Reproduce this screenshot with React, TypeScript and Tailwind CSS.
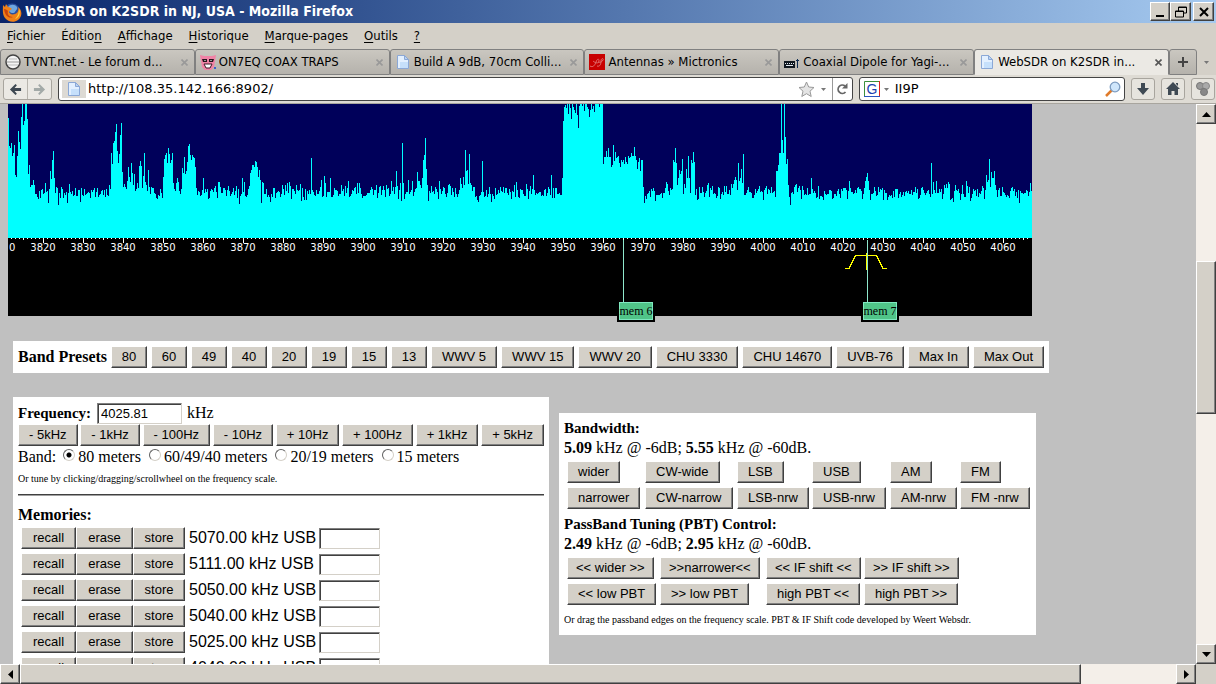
import { useMemo, useState } from 'react';
import type { ReactNode } from 'react';

// Known signals in the band, one value per pixel column, measured from the top of the plot
const SIGNALS: [number, number[]][] = [
  [0, [14, 42, 44, 39, 52, 49, 41, 71, 73, 52, 27, 38, 45, 13, 0, 21, 17, 0, 0, 15, 70, 61, 83, 81, 81, 76, 81, 90]],
  [42, [67, 75, 56, 47, 74, 89, 83, 84, 101]],
  [103, [49, 60, 39, 37, 28, 20, 47, 59, 50, 31, 19, 68, 83, 80, 83, 85, 77, 63, 73, 78, 59, 69, 81, 70, 87, 85, 79, 84, 62, 57, 62, 84, 72, 49, 78, 81, 87, 66, 83, 90]],
  [155, [73, 55, 51, 49, 59, 44, 50, 59, 56, 49, 79, 85, 87, 79, 74, 78, 87, 90, 85, 64, 69, 53, 70, 67, 58, 42, 40, 51, 56, 51, 53, 54, 63, 84]],
  [195, [74]],
  [210, [78, 78]],
  [234, [74]],
  [242, [69, 66, 61, 61, 63, 57, 58, 63, 73, 66, 76, 99, 78, 79]],
  [303, [54]],
  [316, [72, 79]],
  [322, [74]],
  [388, [67]],
  [394, [39, 79]],
  [400, [76]],
  [404, [77]],
  [409, [68, 77, 77, 81, 84, 74, 56, 51, 34, 65, 81, 97]],
  [452, [74, 80, 84, 73, 81, 46, 67, 66, 80, 50, 79, 81, 87]],
  [474, [57]],
  [525, [71]],
  [543, [71]],
  [554, [74]],
  [555, [17, 3, 1, 4, 0, 10, 0, 4, 15, 0, 3, 6, 9, 0, 11, 24, 2, 0, 0, 2, 0, 7, 0, 0, 3, 5, 13, 6, 0, 5, 2, 8, 0, 0, 0, 0, 3, 0, 0, 0]],
  [595, [60, 53, 53, 47, 53, 44, 53, 53, 63, 61, 41, 57, 48, 54, 53, 52, 59, 63, 56, 58, 56, 60, 53, 58, 60, 52, 54, 53, 49, 52, 52, 43, 52, 56, 65, 58, 54, 67, 56, 56, 83, 99, 92, 95, 90]],
  [665, [56, 58, 44, 59, 81, 74, 66, 70, 67, 55, 90, 80, 84, 65, 74, 52, 74, 89, 56, 59, 48, 58, 91]],
  [723, [80, 84, 80, 76, 73, 76, 86, 59, 77, 74, 65, 79, 50, 91]],
  [768, [67, 67, 61, 49, 49, 0, 36, 49, 0, 33, 60, 55, 81, 93, 101]],
  [803, [74]],
  [856, [84, 77, 73, 69, 77, 86]],
  [923, [59, 90, 78]],
  [928, [77]],
  [940, [78, 80]],
  [978, [71, 78, 76, 55, 83, 68, 74, 74, 67, 81]],
];

const PLOT_WIDTH = 1024;
const PLOT_HEIGHT = 134;

function buildSpectrum(): number[] {
  const tops: number[] = [];
  let seed = 8902;
  const random = () => {
    seed = (seed * 1103515245 + 12345) % 2147483648;
    return seed / 2147483648;
  };
  for (let x = 0; x < PLOT_WIDTH; x++) {
    tops.push(Math.round(88 + (random() + random() + random() - 1.5) * 9));
  }
  SIGNALS.forEach(([start, values]) => {
    values.forEach((value, i) => {
      tops[start + i] = value;
    });
  });
  return tops;
}

const PRESETS = ['80', '60', '49', '40', '20', '19', '15', '13', 'WWV 5', 'WWV 15', 'WWV 20', 'CHU 3330', 'CHU 14670', 'UVB-76', 'Max In', 'Max Out'];
const STEPS = ['- 5kHz', '- 1kHz', '- 100Hz', '- 10Hz', '+ 10Hz', '+ 100Hz', '+ 1kHz', '+ 5kHz'];
const BANDS = ['80 meters', '60/49/40 meters', '20/19 meters', '15 meters'];
const MEMORIES = ['5070.00 kHz USB', '5111.00 kHz USB', '5050.00 kHz USB', '5040.00 kHz USB', '5025.00 kHz USB', '4040.00 kHz USB'];
const MODES = ['wider', 'CW-wide', 'LSB', 'USB', 'AM', 'FM', 'narrower', 'CW-narrow', 'LSB-nrw', 'USB-nrw', 'AM-nrw', 'FM -nrw'];
const PBT_WIDTH = ['<< wider >>', '>>narrower<<', '<< IF shift <<', '>> IF shift >>'];
const PBT_EDGES = ['<< low PBT', '>> low PBT', 'high PBT <<', 'high PBT >>'];
const MENUS = [
  ['', 'F', 'ichier'],
  ['Éditio', 'n', ''],
  ['', 'A', 'ffichage'],
  ['', 'H', 'istorique'],
  ['', 'M', 'arque-pages'],
  ['', 'O', 'utils'],
  ['', '?', ''],
];

const RAISED = 'bg-[#d4d0c8] border border-t-white border-l-white border-r-[#404040] border-b-[#404040] shadow-[inset_-1px_-1px_0_#808080]';
const SUNKEN = 'bg-white border border-t-[#808080] border-l-[#808080] border-r-[#d4d0c8] border-b-[#d4d0c8] shadow-[inset_1px_1px_0_#404040]';

const PageButton = ({ children, className = 'px-[10px]' }: { children: ReactNode; className?: string }) => (
  <button className={`h-[22px] shrink-0 justify-self-start whitespace-pre text-[13px] leading-[18px] text-black font-['Liberation_Sans',sans-serif] ${RAISED} ${className}`}>
    {children}
  </button>
);

const DocumentIcon = () => (
  <svg className="w-4 h-4 shrink-0" viewBox="0 0 16 16">
    <path d="M2.5 1.5h7l4 4v9h-11z" fill="#e3f0ff" stroke="#8ba8d6" />
    <path d="M9.5 1.5v4h4z" fill="#b9d3f5" stroke="#8ba8d6" />
    <path d="M5 8h8v6H5z" fill="#c6e0fb" />
  </svg>
);

const FirefoxIcon = () => (
  <svg className="w-5 h-5 shrink-0" viewBox="0 0 20 20">
    <circle cx="10" cy="10" r="8.5" fill="#2c4f9e" />
    <path d="M6 5c2-3 7-3 9 0 1 2-1 3-2 5-1 2-5 1-6-1z" fill="#6fa6e0" />
    <path d="M1 3l2 2 1-3 2 3c2 0 3 1 4 2L7 9c0 3 3 4 6 3 3-1 4-4 3-7 5 4 4 10 0 13-4 3-10 2-13-2C0 12 1 7 1 3z" fill="#f08018" />
    <path d="M2 7c2 0 3 1 4 2-1 3 1 6 5 6-4 2-8-1-9-8z" fill="#c9430c" />
    <path d="M17 7c2 4 0 9-4 10 3-3 4-6 4-10z" fill="#ffd23c" />
  </svg>
);

const ForumIcon = () => (
  <svg className="w-4 h-4 shrink-0" viewBox="0 0 16 16">
    <circle cx="8" cy="8" r="7" fill="#f4f4f4" stroke="#444" strokeWidth="1.5" />
    <path d="M4 5h8M3 11h10" stroke="#bbb" />
    <path d="M2 8h12" stroke="#999" />
  </svg>
);

const PinkCatIcon = () => (
  <svg className="w-4 h-4 shrink-0" viewBox="0 0 16 16">
    <path d="M0 1l4 1h8l4-1-1 6-1 6-3 3H5l-3-3-1-6z" fill="#f083a6" />
    <path d="M2 5h5v3H3zM9 5h5l-1 3H9z" fill="#24141c" />
    <path d="M4 6h2v1H4zM10 6h2v1h-2z" fill="#999" />
    <path d="M4 10h8l-2 4H6z" fill="#fff" stroke="#401828" />
    <path d="M14 13h2v2h-2z" fill="#3d62c9" />
  </svg>
);

const AntennaIcon = () => (
  <svg className="w-4 h-4 shrink-0" viewBox="0 0 16 16">
    <path d="M0 0h16v16H0z" fill="#c80000" />
    <path d="M1 12c3 2 5-1 6-4s3-4 3-1-4 2-6 0M8 12c3 1 4-2 4-5s3-3 2-1-3 3-5 2" fill="none" stroke="#e06a6a" />
  </svg>
);

const RadioIcon = () => (
  <svg className="w-4 h-4 shrink-0" viewBox="0 0 16 16">
    <path d="M0 7h11v7H0z" fill="#101820" />
    <path d="M1 9h1v1H1zM3 9h1v1H3zM5 9h1v1H5zM7 9h1v1H7zM9 9h1v1H9zM2 11h7v1H2z" fill="#e0e8f0" />
    <path d="M13 5h1v9h-1zM12 6h3v1h-3z" fill="#0c2a50" />
  </svg>
);

const TABS: { title: string; icon: ReactNode }[] = [
  { title: 'TVNT.net - Le forum d...', icon: <ForumIcon /> },
  { title: 'ON7EQ COAX TRAPS', icon: <PinkCatIcon /> },
  { title: 'Build A 9dB, 70cm Colli...', icon: <DocumentIcon /> },
  { title: 'Antennas » Mictronics', icon: <AntennaIcon /> },
  { title: 'Coaxial Dipole for Yagi-...', icon: <RadioIcon /> },
  { title: 'WebSDR on K2SDR in...', icon: <DocumentIcon /> },
];

const ArrowIcon = ({ className }: { className: string }) => (
  <svg className={className} viewBox="0 0 14 14">
    <path d="M1 7l6-6 1.500 1.500L6 5.500h7v3H6l2.500 3L7 13z" fill="currentColor" />
  </svg>
);

const CaretIcon = ({ className = '' }: { className?: string }) => (
  <svg className={`w-[5px] h-[3px] shrink-0 text-[#777] ${className}`} viewBox="0 0 5 3">
    <path d="M0 0h5L2.500 3z" fill="currentColor" />
  </svg>
);

const CloseIcon = ({ className }: { className: string }) => (
  <svg className={`w-[7px] h-[7px] ${className}`} viewBox="0 0 7 7">
    <path d="M0.500 0.500l6 6M6.500 0.500l-6 6" stroke="currentColor" strokeWidth="1.600" />
  </svg>
);

const TitleBar = () => (
  <header className="flex items-center h-[23px] shrink-0 pl-[2px] pr-[2px] bg-gradient-to-r from-[#0a246a] to-[#a6caf0]">
    <FirefoxIcon />
    <h1 className="flex-1 ml-[3px] text-[14px] font-bold text-white whitespace-nowrap">
      WebSDR on K2SDR in NJ, USA - Mozilla Firefox
    </h1>
    <button aria-label="Minimize" className={`w-5 h-[19px] flex items-center justify-center ${RAISED}`}>
      <svg className="w-3 h-3" viewBox="0 0 12 12"><path d="M2 9h8v2H2z" /></svg>
    </button>
    <button aria-label="Restore" className={`w-[21px] h-[19px] flex items-center justify-center ${RAISED}`}>
      <svg className="w-3 h-3" viewBox="0 0 12 12">
        <path d="M3.500 5V1H11.500V7H9M3 1.500h9M0.500 5h8v6h-8zM0 5.500h9" fill="none" stroke="#000" />
      </svg>
    </button>
    <button aria-label="Close" className={`w-[21px] h-[19px] ml-[2px] flex items-center justify-center ${RAISED}`}>
      <svg className="w-[10px] h-[10px]" viewBox="0 0 10 10"><path d="M1 1l8 8M9 1l-8 8" stroke="#000" strokeWidth="2" /></svg>
    </button>
  </header>
);

const MenuBar = () => (
  <nav className="flex items-center h-[26px] shrink-0 pl-[7px] gap-4 text-[13px]">
    {MENUS.map(([before, key, after]) => (
      <button key={key} className="whitespace-nowrap">
        {before}<span className="underline underline-offset-2">{key}</span>{after}
      </button>
    ))}
  </nav>
);

const TabBar = () => (
  <div className="flex h-[26px] shrink-0 text-[13px]">
    {TABS.map((tab, i) => {
      const active = i === TABS.length - 1;
      return (
        <div
          key={tab.title}
          className={`flex flex-1 min-w-0 items-center pl-1 pr-[6px] border border-[#808080] rounded-t-[3px] ${
            active ? 'bg-[#ebe9e4] border-b-[#ebe9e4]' : 'bg-gradient-to-b from-[#cac7c0] to-[#b5b2ac]'
          }`}
        >
          {tab.icon}
          <button className="flex-1 min-w-0 ml-[3px] text-left whitespace-nowrap overflow-hidden">{tab.title}</button>
          <button aria-label="Close tab" className="ml-1">
            <CloseIcon className={active ? 'text-[#555]' : 'text-[#999]'} />
          </button>
        </div>
      );
    })}
    <button aria-label="New tab" className="w-7 flex items-center justify-center border border-[#808080] rounded-t-[3px] bg-gradient-to-b from-[#cac7c0] to-[#b5b2ac]">
      <svg className="w-[10px] h-[10px]" viewBox="0 0 10 10"><path d="M5 0v10M0 5h10" stroke="#444" strokeWidth="2" /></svg>
    </button>
    <button aria-label="List all tabs" className="w-[19px] flex items-center justify-center">
      <CaretIcon />
    </button>
  </div>
);

const NAV_BUTTON = 'w-6 h-[22px] flex items-center justify-center shrink-0 bg-[#e6e4de] border border-[#a8a59e] rounded-[3px]';

const NavBar = () => (
  <div className="flex items-center h-[29px] shrink-0 pl-[3px] pr-px gap-[6px] bg-[#dedbd4] border-b border-[#a8a59e]">
    <div className="flex w-[49px] h-[22px] shrink-0 bg-[#ebe9e4] border border-[#a8a59e] rounded-[3px]">
      <button aria-label="Back" className="flex-1 flex items-center justify-center border-r border-[#b8b5ae]">
        <ArrowIcon className="w-[13px] h-[13px] text-[#3d4852]" />
      </button>
      <button aria-label="Forward" className="flex-1 flex items-center justify-center">
        <ArrowIcon className="w-[13px] h-[13px] text-[#a3aaa8] rotate-180" />
      </button>
    </div>
    <div className="flex flex-[3] items-center h-6 bg-white border border-[#444] rounded-[3px]">
      <div className="flex w-6 h-[18px] ml-[3px] items-center justify-center shrink-0 bg-[#dddad4]">
        <DocumentIcon />
      </div>
      <input aria-label="Address" defaultValue="http://108.35.142.166:8902/" className="flex-1 min-w-0 ml-[2px] outline-none text-[13px] font-['DejaVu_Sans',sans-serif]" />
      <button aria-label="Bookmark this page">
        <svg className="w-[17px] h-[17px]" viewBox="0 0 17 17">
          <path d="M8.500 1l2.200 5 5.300.500-4 3.700 1.200 5.300-4.700-2.800-4.700 2.800L5 10.200 1 6.500 6.300 6z" fill="#e4e4e4" stroke="#999" />
        </svg>
      </button>
      <button aria-label="History" className="px-[6px]"><CaretIcon /></button>
      <button aria-label="Reload" className="flex w-5 h-full items-center justify-center border-l border-[#999]">
        <svg className="w-3 h-3" viewBox="0 0 12 12">
          <path d="M9.500 9A4.200 4.200 0 1 1 9 3" fill="none" stroke="#666" strokeWidth="1.800" />
          <path d="M11.500 0v5.500H6z" fill="#666" />
        </svg>
      </button>
    </div>
    <div className="flex flex-1 items-center h-6 bg-white border border-[#444] rounded-[3px]">
      <svg className="w-4 h-4 ml-1 shrink-0" viewBox="0 0 16 16">
        <path d="M0.500 15.500V0.500H15.500" fill="none" stroke="#3c8f3c" />
        <path d="M15.500 0v15.500" stroke="#d22" />
        <path d="M0 15.500H16" stroke="#2a55c0" />
        <text x="8" y="13" textAnchor="middle" fontSize="14" fill="#1b3fb0" fontFamily="Liberation Sans, sans-serif">G</text>
      </svg>
      <CaretIcon className="ml-1" />
      <input aria-label="Search" defaultValue="II9P" className="flex-1 min-w-0 ml-[6px] outline-none text-[13px] font-['DejaVu_Sans',sans-serif]" />
      <button aria-label="Search" className="mr-[3px]">
        <svg className="w-4 h-4" viewBox="0 0 16 16">
          <path d="M1 15l6-6" stroke="#e07b2a" strokeWidth="2.500" />
          <circle cx="10" cy="6" r="4.800" fill="#cfe6fb" stroke="#7d9cc0" strokeWidth="1.300" />
        </svg>
      </button>
    </div>
    <button aria-label="Downloads" className={NAV_BUTTON}>
      <svg className="w-[14px] h-[14px]" viewBox="0 0 14 14"><path d="M5 1h4v5h4l-6 7-6-7h4z" fill="#3f4a54" /></svg>
    </button>
    <button aria-label="Home" className={NAV_BUTTON}>
      <svg className="w-4 h-4" viewBox="0 0 16 16"><path d="M8 1l7 7h-2v6H9.500v-4h-3v4H3V8H1zM11 2h2v3l-2-2z" fill="#3f4a54" /></svg>
    </button>
    <button aria-label="Add-ons" className={NAV_BUTTON}>
      <svg className="w-4 h-4" viewBox="0 0 16 16">
        <circle cx="5" cy="5" r="3.500" fill="#999" stroke="#777" />
        <circle cx="11" cy="5" r="3.500" fill="#aaa" stroke="#888" />
        <circle cx="9" cy="11" r="3.500" fill="#888" stroke="#777" />
      </svg>
    </button>
  </div>
);

const MemoryFlag = ({ label, className }: { label: string; className: string }) => (
  <div className={`absolute top-[136px] flex flex-col ${className}`}>
    <div className="w-px h-[62px] ml-[6px] bg-[#8fe8cc]" />
    <button className="h-5 border-2 border-t-0 border-black bg-[#50c488] text-[12px] leading-4 shadow-[inset_0_0_0_1px_#7fe8c0] font-['Liberation_Serif',serif]">
      {label}
    </button>
  </div>
);

function Spectrum() {
  const tops = useMemo(buildSpectrum, []);
  const path = `M0 ${PLOT_HEIGHT}${tops.map((top, x) => `V${top}H${x + 1}`).join('')}V${PLOT_HEIGHT}Z`;
  const ticks = Array.from({ length: 257 }, (_, i) => i);
  const labels = Array.from({ length: 25 }, (_, i) => i);

  return (
    <div className="relative w-[1024px] h-[212px] bg-black">
      <svg className="block w-[1024px] h-[212px] overflow-hidden" viewBox="0 0 1024 212" shapeRendering="crispEdges">
        <path d="M0 0H1024V134H0z" fill="#00005a" />
        <path d={path} fill="#00ffff" />
        {ticks.map((i) => {
          // 3810 kHz sits 5px left of the canvas, 4px per kHz
          const height = i % 10 === 0 ? 5 : i % 5 === 0 ? 2 : 1;
          return <path key={i} d={`M${i * 4 - 5} 134h1v${height}h-1z`} fill="#fff" />;
        })}
        <text x="1" y="147" fontSize="10" fill="#fff" fontFamily="DejaVu Sans, sans-serif">0</text>
        {labels.map((i) => (
          <text key={i} x={i * 40 + 35} y="147" textAnchor="middle" fontSize="10" fill="#fff" fontFamily="DejaVu Sans, sans-serif">
            {3820 + i * 10}
          </text>
        ))}
        <path d="M837 164.500h4L847.500 151.500H868.500L875 164.500h4" fill="none" stroke="#ffff00" />
        <path d="M858 149h1v17h-1z" fill="#ffff00" />
      </svg>
      <MemoryFlag label="mem 6" className="left-[609px] w-[38px]" />
      <MemoryFlag label="mem 7" className="left-[853px] w-[38px]" />
    </div>
  );
}

function TuningPanel() {
  const [band, setBand] = useState(BANDS[0]);

  return (
    <section className="w-[536px] shrink-0 p-[5px] bg-white">
      <div className="flex items-center h-[22px]">
        <label htmlFor="frequency" className="text-[15px] font-bold">Frequency:</label>
        <input id="frequency" defaultValue="4025.81" className={`w-[85px] h-[21px] ml-[6px] px-[3px] text-[13px] font-['Liberation_Sans',sans-serif] ${SUNKEN}`} />
        <span className="ml-[5px]">kHz</span>
      </div>
      <div className="flex justify-between">
        {STEPS.map((step) => (
          <PageButton key={step}>{step}</PageButton>
        ))}
      </div>
      <div className="flex items-center h-[22px]">
        <span className="mr-[7px]">Band:</span>
        {BANDS.map((name) => (
          <label key={name} className="flex items-center mr-2">
            <input
              type="radio"
              name="band"
              checked={band === name}
              onChange={() => setBand(name)}
              className="appearance-none w-3 h-3 mr-[3px] mb-1 rounded-full bg-white border border-t-[#606060] border-l-[#606060] border-r-[#d4d0c8] border-b-[#d4d0c8] checked:bg-[radial-gradient(circle,#000_2px,#fff_3px)]"
            />
            {name}
          </label>
        ))}
      </div>
      <p className="h-[22px] text-[10px] leading-[22px]">Or tune by clicking/dragging/scrollwheel on the frequency scale.</p>
      <hr className="h-[2px] my-1 border-t border-b border-t-[#404040] border-b-[#a0a0a0]" />
      <h2 className="mt-[9px] leading-5 font-bold">Memories:</h2>
      <table className="border-separate border-spacing-x-[3px] border-spacing-y-0">
        <tbody>
          {MEMORIES.map((memory) => (
            <tr key={memory} className="h-[26px]">
              <td className="p-0">
                <div className="flex">
                  <PageButton className="w-[55px]">recall</PageButton>
                  <PageButton className="w-[57px]">erase</PageButton>
                  <PageButton className="w-[52px]">store</PageButton>
                </div>
              </td>
              <td className="p-0 pl-px whitespace-nowrap font-['Liberation_Sans',sans-serif]">{memory}</td>
              <td className="p-0">
                <input aria-label={`Label for ${memory}`} className={`block w-[61px] h-[21px] ${SUNKEN}`} />
              </td>
            </tr>
          ))}
        </tbody>
      </table>
    </section>
  );
}

const BandwidthPanel = () => (
  <section className="w-[477px] shrink-0 mt-4 p-[5px] bg-white">
    <h2 className="text-[15px] leading-5 font-bold">Bandwidth:</h2>
    <p className="leading-5"><b>5.09</b> kHz @ -6dB; <b>5.55</b> kHz @ -60dB.</p>
    <div className="grid grid-cols-[78px_92px_75px_78px_70px_auto] gap-y-1 pl-[3px] my-[3px]">
      {MODES.map((mode) => (
        <PageButton key={mode}>{mode}</PageButton>
      ))}
    </div>
    <h2 className="mt-[5px] text-[15px] leading-5 font-bold">PassBand Tuning (PBT) Control:</h2>
    <p className="leading-5"><b>2.49</b> kHz @ -6dB; <b>2.95</b> kHz @ -60dB.</p>
    <div className="grid grid-cols-[93px_106px_98px_auto] gap-y-1 pl-[3px] my-[3px]">
      {PBT_WIDTH.map((name) => (
        <PageButton key={name} className="px-2">{name}</PageButton>
      ))}
      {PBT_EDGES.map((name) => (
        <PageButton key={name}>{name}</PageButton>
      ))}
    </div>
    <p className="mt-[5px] text-[10px] leading-5">
      Or drag the passband edges on the frequency scale. PBT &amp; IF Shift code developed by Weert Websdr.
    </p>
  </section>
);

const ScrollButton = ({ label, path }: { label: string; path: string }) => (
  <button aria-label={label} className={`w-5 h-5 shrink-0 flex items-center justify-center ${RAISED}`}>
    <svg className="w-[9px] h-[9px]" viewBox="0 0 9 9"><path d={path} /></svg>
  </button>
);

export default function App() {
  return (
    <div className="flex flex-col h-screen overflow-hidden bg-[#d4d0c8] text-black font-['DejaVu_Sans_Condensed','DejaVu_Sans',sans-serif]">
      <TitleBar />
      <MenuBar />
      <TabBar />
      <NavBar />

      <div className="flex flex-1 min-h-0">
        {/* Page */}
        <main className="flex-1 min-w-0 overflow-hidden pl-2 bg-[#c0c0c0] text-base font-['Liberation_Serif',serif]">
          <Spectrum />
          <div className="pl-[5px] pt-[25px]">
            <section className="flex w-max items-center h-8 px-[5px] gap-1 bg-white">
              <h2 className="font-bold whitespace-nowrap">Band Presets</h2>
              {PRESETS.map((preset) => (
                <PageButton key={preset} className={preset.length === 2 ? 'w-9' : 'px-[10px]'}>{preset}</PageButton>
              ))}
            </section>
            <div className="flex items-start mt-6 gap-[10px]">
              <TuningPanel />
              <BandwidthPanel />
            </div>
          </div>
        </main>

        {/* Vertical scrollbar */}
        <div className="flex flex-col w-5 shrink-0 bg-[#f4efe9]">
          <ScrollButton label="Scroll up" path="M0 7L4.500 2L9 7z" />
          <div className="flex-[137]" />
          <div className={`flex-[151] ${RAISED}`} />
          <div className="flex-[230]" />
          <ScrollButton label="Scroll down" path="M0 2L4.500 7L9 2z" />
        </div>
      </div>

      {/* Horizontal scrollbar */}
      <div className="flex h-5 shrink-0 bg-[#f4efe9]">
        <ScrollButton label="Scroll left" path="M7 0L2 4.500L7 9z" />
        <div className={`flex-[1061] ${RAISED}`} />
        <div className="flex-[95]" />
        <ScrollButton label="Scroll right" path="M2 0L7 4.500L2 9z" />
        <div className="w-5 bg-[#d4d0c8]" />
      </div>
    </div>
  );
}
